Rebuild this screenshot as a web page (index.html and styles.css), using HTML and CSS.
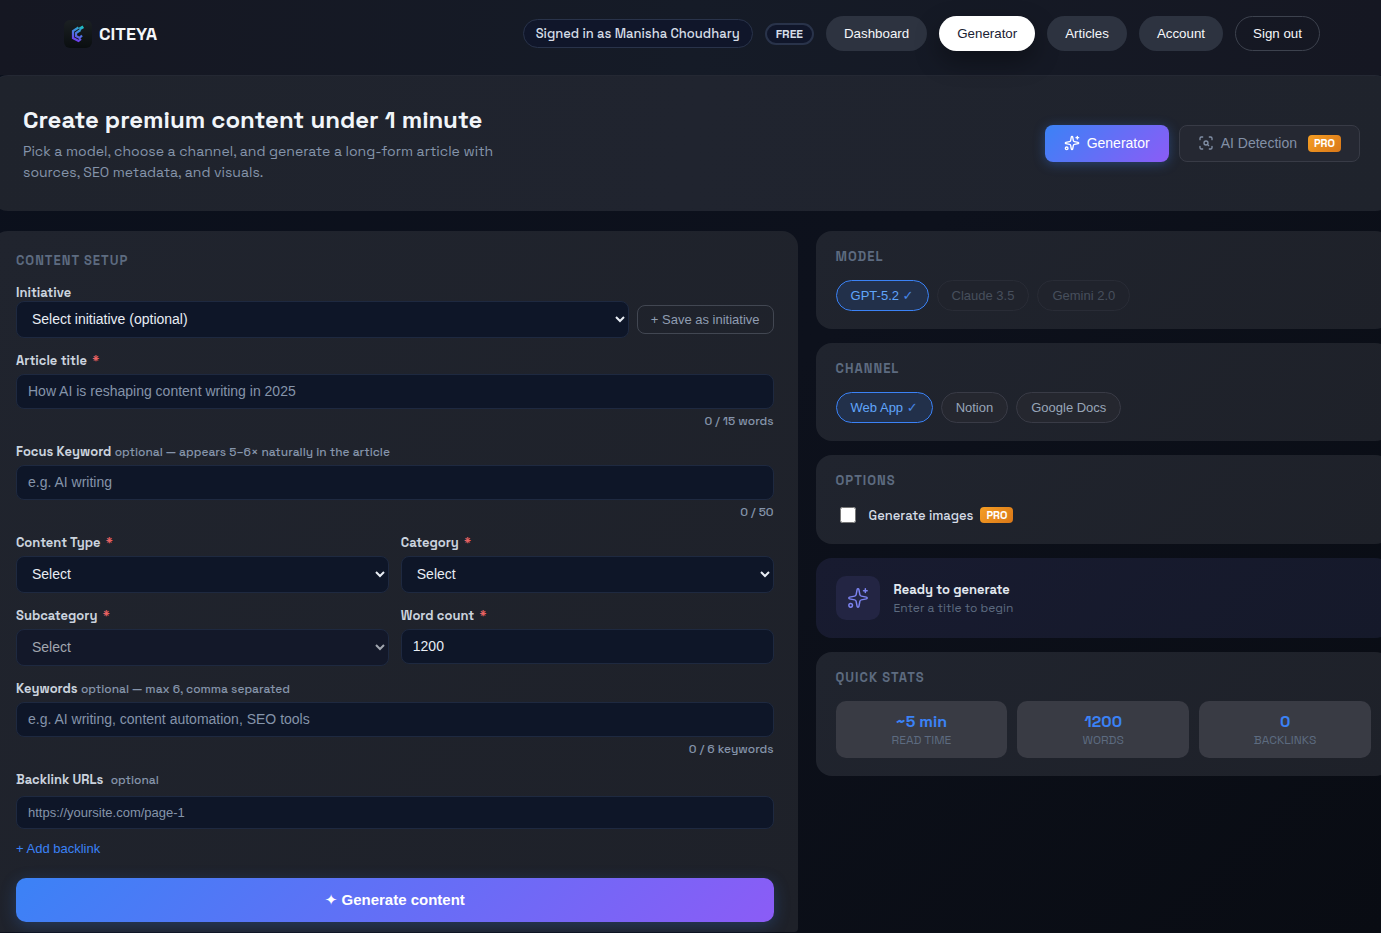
FILE: index.html
```html
<!DOCTYPE html>
<html lang="en">
<head>
<meta charset="utf-8">
<meta name="viewport" content="width=device-width, initial-scale=1">
<title>Citeya – Generator</title>
<link rel="stylesheet" href="styles.css">
</head>
<body>
<svg class="defs" aria-hidden="true">
  <symbol id="sparkles" viewBox="0 0 24 24"><path d="M11.017 2.814a1 1 0 0 1 1.966 0l1.051 5.558a2 2 0 0 0 1.594 1.594l5.558 1.051a1 1 0 0 1 0 1.966l-5.558 1.051a2 2 0 0 0-1.594 1.594l-1.051 5.558a1 1 0 0 1-1.966 0l-1.051-5.558a2 2 0 0 0-1.594-1.594l-5.558-1.051a1 1 0 0 1 0-1.966l5.558-1.051a2 2 0 0 0 1.594-1.594z"/><path d="M20 2v4M22 4h-4"/><circle cx="4" cy="20" r="2"/></symbol>
  <symbol id="scan" viewBox="0 0 24 24"><path d="M3 7V5a2 2 0 0 1 2-2h2M17 3h2a2 2 0 0 1 2 2v2M21 17v2a2 2 0 0 1-2 2h-2M7 21H5a2 2 0 0 1-2-2v-2M16 16l-1.9-1.9"/><circle cx="12" cy="12" r="3"/></symbol>
</svg>
<header class="topbar">
  <a class="brand" href="#">
    <svg class="logo" viewBox="0 0 28 28" aria-hidden="true">
      <defs>
        <linearGradient id="lb" x1="0" y1="0" x2="0" y2="1"><stop offset="0" stop-color="#1b2023"/><stop offset="1" stop-color="#0a0e10"/></linearGradient>
        <linearGradient id="lg" gradientUnits="userSpaceOnUse" x1="18" y1="6" x2="11" y2="22"><stop offset="0" stop-color="#19c5c0"/><stop offset=".45" stop-color="#4a7fe0"/><stop offset="1" stop-color="#7430ee"/></linearGradient>
      </defs>
      <rect width="28" height="28" rx="6" fill="url(#lb)"/>
      <g fill="none" stroke="url(#lg)">
        <path d="M14.500 7.500L9 11v7l5.500 3 2.500-2" stroke-width="2.200"/>
        <path d="M16.500 10l-4.500 3v3l3.500 2 2.500-2.500" stroke-width="2.200"/>
        <path d="M15.500 9l3.800-2.200" stroke-width="3"/>
      </g>
    </svg>
    <span>CITEYA</span>
  </a>
  <nav class="nav">
    <span class="user">Signed in as Manisha Choudhary</span>
    <span class="plan">FREE</span>
    <button class="navbtn">Dashboard</button>
    <button class="navbtn active">Generator</button>
    <button class="navbtn">Articles</button>
    <button class="navbtn">Account</button>
    <button class="navbtn outline">Sign out</button>
  </nav>
</header>
<main class="page">
  <section class="hero">
    <div>
      <h1>Create premium content under 1 minute</h1>
      <p>Pick a model, choose a channel, and generate a long-form article with sources, SEO metadata, and visuals.</p>
    </div>
    <div class="tabs">
      <button class="tab on"><svg class="icon"><use href="#sparkles"/></svg>Generator</button>
      <button class="tab"><svg class="icon"><use href="#scan"/></svg>AI Detection<span class="pro">PRO</span></button>
    </div>
  </section>
  <div class="columns">
    <form class="card setup">
      <h2>Content setup</h2>
      <div class="field">
        <label class="tight" for="init">Initiative</label>
        <div class="row">
          <select id="init"><option>Select initiative (optional)</option></select>
          <button type="button" class="save">+ Save as initiative</button>
        </div>
      </div>
      <div class="field">
        <label for="title">Article title <b>*</b></label>
        <input id="title" type="text" placeholder="How AI is reshaping content writing in 2025">
        <span class="count">0 / 15 words</span>
      </div>
      <div class="field">
        <label for="focus">Focus Keyword <small>optional — appears 5–6× naturally in the article</small></label>
        <input id="focus" type="text" placeholder="e.g. AI writing">
        <span class="count">0 / 50</span>
      </div>
      <div class="pair">
        <div class="field"><label for="type">Content Type <b>*</b></label><select id="type"><option>Select</option></select></div>
        <div class="field"><label for="cat">Category <b>*</b></label><select id="cat"><option>Select</option></select></div>
        <div class="field"><label for="sub">Subcategory <b>*</b></label><select id="sub" disabled><option>Select</option></select></div>
        <div class="field"><label for="wc">Word count <b>*</b></label><input id="wc" type="text" inputmode="numeric" value="1200"></div>
      </div>
      <div class="field">
        <label for="kw">Keywords <small>optional — max 6, comma separated</small></label>
        <input id="kw" type="text" placeholder="e.g. AI writing, content automation, SEO tools">
        <span class="count">0 / 6 keywords</span>
      </div>
      <div class="field">
        <label class="loose" for="url">Backlink URLs <small>optional</small></label>
        <input id="url" class="small" type="url" placeholder="https://yoursite.com/page-1">
        <button type="button" class="add">+ Add backlink</button>
      </div>
      <button type="button" class="generate">✦ Generate content</button>
    </form>
    <aside class="side">
      <section class="card">
        <h2>Model</h2>
        <div class="pills">
          <button class="pill on">GPT-5.2 <span>✓</span></button>
          <button class="pill" disabled>Claude 3.5</button>
          <button class="pill" disabled>Gemini 2.0</button>
        </div>
      </section>
      <section class="card">
        <h2>Channel</h2>
        <div class="pills">
          <button class="pill on">Web App <span>✓</span></button>
          <button class="pill">Notion</button>
          <button class="pill">Google Docs</button>
        </div>
      </section>
      <section class="card">
        <h2>Options</h2>
        <label class="check"><input type="checkbox"><span>Generate images</span><span class="pro">PRO</span></label>
      </section>
      <section class="card ready">
        <span class="tile"><svg class="icon"><use href="#sparkles"/></svg></span>
        <div><strong>Ready to generate</strong><p>Enter a title to begin</p></div>
      </section>
      <section class="card">
        <h2>Quick stats</h2>
        <div class="stats">
          <div class="stat"><strong>~5 min</strong><span>Read time</span></div>
          <div class="stat"><strong>1200</strong><span>Words</span></div>
          <div class="stat"><strong>0</strong><span>Backlinks</span></div>
        </div>
      </section>
    </aside>
  </div>
</main>
</body>
</html>
```
FILE: styles.css
```css
* { box-sizing: border-box; }

:root {
  --ui: "Space Grotesk", Inter, sans-serif;
  --control: Arial, "Liberation Sans", "DejaVu Sans", sans-serif;
  --muted: #8594aa;
  --dim: #5d6b80;
}

body {
  margin: 0;
  min-height: 100vh;
  overflow-x: hidden;
  background: linear-gradient(135deg, #0b101c, #0d111c 50%, #090c13);
  color: #e8edf4;
  font-family: var(--ui);
  font-size: 14px;
}

h1, h2, p { margin: 0; }
button, input, select { font-family: var(--control); }
button { cursor: pointer; }
.defs { position: absolute; width: 0; height: 0; }

.icon {
  width: 16px;
  height: 16px;
  fill: none;
  stroke: currentColor;
  stroke-width: 2;
  stroke-linecap: round;
  stroke-linejoin: round;
}

/* Top bar */
.topbar {
  display: flex;
  justify-content: space-between;
  align-items: center;
  padding: 16px 61px 24px 64px;
  background: linear-gradient(90deg, #151722, #151b27 50%, #151722);
}
.brand {
  display: flex;
  align-items: center;
  gap: 7px;
  color: #f5f7fa;
  font-size: 18px;
  font-weight: 700;
  line-height: 28px;
  text-decoration: none;
}
.logo { width: 28px; height: 28px; }
.nav { display: flex; align-items: center; gap: 12px; }
.user, .plan {
  border: 1px solid #29334a;
  border-radius: 20px;
  background: #10162a;
  color: #d5dce6;
  white-space: nowrap;
}
.user { padding: 0 12px; font-size: 13px; font-weight: 500; line-height: 27px; }
.plan { padding: 0 9px; border-width: 2px; font-size: 12px; font-weight: 700; line-height: 18px; }
.navbtn {
  height: 35px;
  padding: 0 17px;
  border: 1px solid transparent;
  border-radius: 18px;
  background: #2d3340;
  color: #f5f7fa;
  white-space: nowrap;
}
.navbtn.active { background: #fff; color: #1a2133; box-shadow: 0 10px 24px rgba(0, 0, 0, .35); }
.navbtn.outline { background: none; border-color: #3d424e; }

/* Page */
.page { margin: 0 -10px 0 -8px; }
.hero {
  display: flex;
  justify-content: space-between;
  align-items: center;
  padding: 28px 31px;
  border-top: 1px solid #242833;
  border-radius: 16px;
  background: linear-gradient(100deg, #1f232c, #20242f 50%, #1f232c);
}
h1 { font-size: 24px; font-weight: 700; line-height: 31px; color: #f1f5f9; }
.hero p { max-width: 480px; margin-top: 6px; color: var(--muted); font-size: 14px; line-height: 21px; }
.tabs { display: flex; gap: 10px; }
.tab {
  display: flex;
  align-items: center;
  gap: 7px;
  height: 37px;
  padding: 0 18px 1px;
  border: 1px solid #383b46;
  border-radius: 8px;
  background: #252832;
  color: #8290a6;
  font-size: 14px;
  white-space: nowrap;
}
.tab.on {
  border-color: transparent;
  background: linear-gradient(135deg, #3b82f6, #8b5cf6) border-box;
  color: #fff;
  box-shadow: 0 2px 12px rgba(59, 130, 246, .35);
}
.pro {
  padding: 0 6px;
  border-radius: 4px;
  background: linear-gradient(135deg, #f59e24, #d97718);
  color: #fff;
  font: 700 11px/17px var(--ui);
}
.tab .pro { margin-left: 4px; }

.columns { display: grid; grid-template-columns: 1.4fr 1fr; gap: 18px; margin-top: 20px; }
.card { padding: 18px 20px; border-radius: 16px; background: linear-gradient(135deg, #20242e, #1e2129); }
h2 {
  margin-bottom: 15px;
  color: var(--dim);
  font-size: 13px;
  font-weight: 600;
  line-height: 16px;
  letter-spacing: 1px;
  text-transform: uppercase;
}

/* Form */
.setup { display: flex; flex-direction: column; gap: 15px; padding: 22px 24px 10px; border-radius: 16px 16px 4px 4px; }
.setup h2 { margin-bottom: 1px; }
.field { display: flex; flex-direction: column; min-width: 0; }
.field label { margin-bottom: 5px; color: #cbd3de; font-size: 13px; font-weight: 600; line-height: 16px; }
.field label.tight { margin-bottom: 0; }
.field label.loose { margin-bottom: 8px; }
.loose small { margin-left: 4px; }
label b { margin-left: 2px; color: #ef6464; font-weight: 700; }
label small { color: var(--muted); font-size: 12px; font-weight: 500; }
.row { display: flex; align-items: center; gap: 8px; }
.row select { flex: 1; min-width: 0; }
input[type="text"], input[type="url"], select {
  width: 100%;
  height: 35px;
  padding: 0 11px 2px;
  border: 1px solid #1e2940;
  border-radius: 8px;
  background-color: #0e1628;
  color: #e8edf4;
  font-size: 14px;
}
select { height: 37px; }
select:disabled { background-color: #131829; color: #a1a6af; opacity: 1; }
input.small[type="url"] { height: 33px; padding-bottom: 0; font-size: 13px; }
input::placeholder { color: var(--muted); }
.count { align-self: flex-end; margin-top: 4px; color: var(--muted); font-size: 12px; font-weight: 500; line-height: 16px; }
.save {
  height: 29px;
  padding: 0 13px;
  border: 1px solid #424752;
  border-radius: 8px;
  background: none;
  color: #8f9db2;
  font-size: 13px;
  white-space: nowrap;
}
.pair { display: grid; grid-template-columns: 1fr 1fr; gap: 15px 12px; }
.add {
  align-self: flex-start;
  margin-top: 12px;
  padding: 0;
  border: 0;
  background: none;
  color: #3b82f6;
  font-size: 13px;
  line-height: 16px;
}
.generate {
  height: 44px;
  margin-top: 6px;
  border: 0;
  border-radius: 10px;
  background: linear-gradient(135deg, #3b82f6, #8b5cf6);
  box-shadow: 0 4px 16px rgba(59, 130, 246, .25);
  color: #fff;
  font-size: 15px;
  font-weight: 700;
}

/* Sidebar */
.side { display: flex; flex-direction: column; gap: 14px; min-width: 0; }
.pills { display: flex; gap: 8px; }
.pill {
  height: 31px;
  padding: 0 14px;
  border: 1px solid #393b46;
  border-radius: 16px;
  background: #25272f;
  color: #98a5b8;
  font-size: 13px;
  white-space: nowrap;
}
.pill.on { border-color: #3b82f6; background: #22304a; color: #60a5fa; }
.pill.on span { color: #4787e8; }
.pill:disabled { border-color: #292c36; background: #20232c; color: #474f5c; }
.check { display: flex; align-items: center; height: 22px; color: #d5dce6; font-size: 13px; font-weight: 500; }
.check input { width: 16px; height: 16px; margin: 0 13px 0 4px; }
.check .pro { margin-left: 7px; line-height: 16px; }
.ready { display: flex; align-items: center; gap: 14px; background: linear-gradient(135deg, #181b30, #15192a); }
.tile {
  display: grid;
  place-items: center;
  width: 44px;
  height: 44px;
  border-radius: 10px;
  background: #232543;
  color: #7c83f0;
}
.tile .icon { width: 22px; height: 22px; stroke-width: 1.6; }
.ready strong { display: block; font-size: 13px; line-height: 18px; color: #e2e8f0; }
.ready p { margin-top: 1px; color: var(--dim); font-size: 12px; line-height: 16px; }
.stats { display: grid; grid-template-columns: repeat(3, 1fr); gap: 10px; }
.stat { padding: 10px; border-radius: 10px; background: #393b44; text-align: center; }
.stat strong { display: block; color: #3b82f6; font-size: 16px; line-height: 21px; }
.stat span { display: block; color: var(--dim); font-size: 12px; line-height: 16px; text-transform: uppercase; }
```
